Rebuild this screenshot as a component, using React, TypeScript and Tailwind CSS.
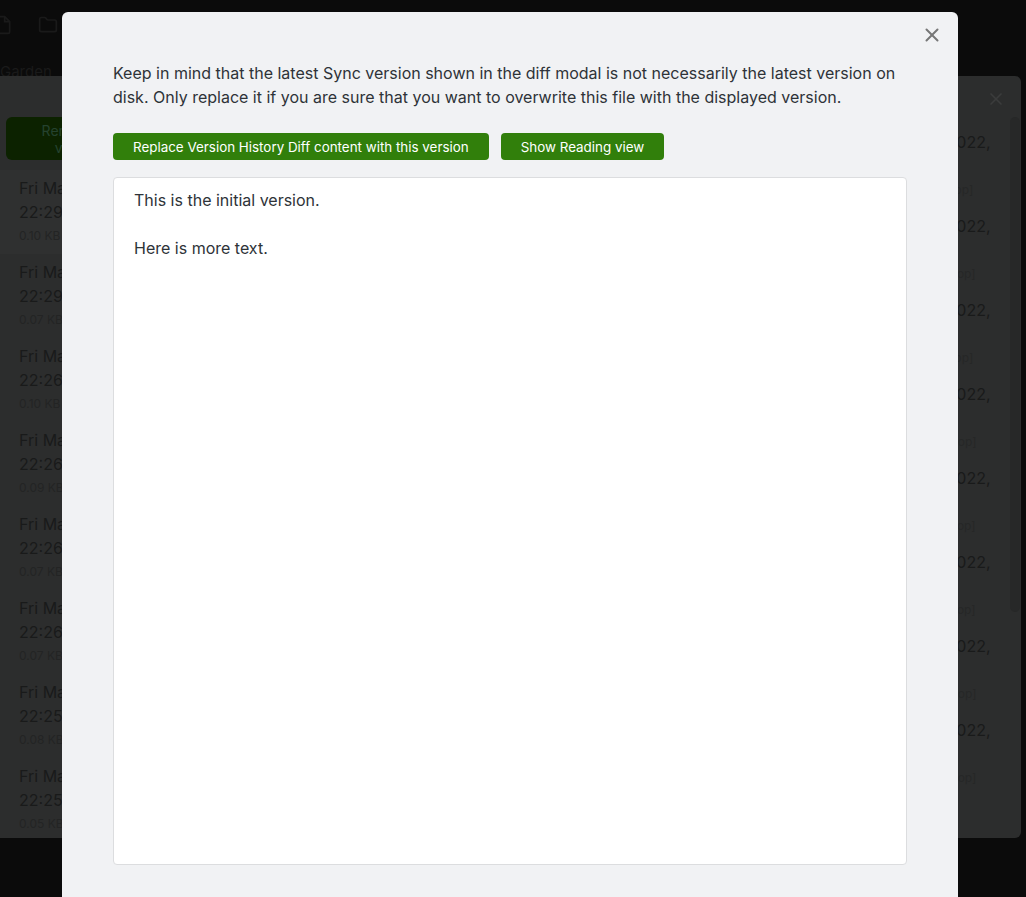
import { X } from 'lucide-react'

const rows = [
  { time: '22:29:41', size: '0.10 KB' },
  { time: '22:29:12', size: '0.07 KB' },
  { time: '22:26:50', size: '0.10 KB' },
  { time: '22:26:31', size: '0.09 KB' },
  { time: '22:26:12', size: '0.07 KB' },
  { time: '22:26:02', size: '0.07 KB' },
  { time: '22:25:44', size: '0.08 KB' },
  { time: '22:25:20', size: '0.05 KB' },
]

function TopBar() {
  return (
    <div className="h-[76px] overflow-hidden pt-[15px] text-[#1a1a1a]">
      <div className="-ml-[7px] flex items-center gap-[24px]">
        <svg width="20" height="20" viewBox="0 0 24 24" fill="none" stroke="currentColor" strokeWidth="2">
          <path d="M14 2H6a2 2 0 0 0-2 2v16a2 2 0 0 0 2 2h12a2 2 0 0 0 2-2V8z" />
          <path d="M14 2v6h6" />
        </svg>
        <svg width="22" height="20" viewBox="0 0 24 24" fill="none" stroke="currentColor" strokeWidth="2">
          <path d="M4 20h16a2 2 0 0 0 2-2V8a2 2 0 0 0-2-2h-7.9a2 2 0 0 1-1.69-.9L9.6 3.9A2 2 0 0 0 7.93 3H4a2 2 0 0 0-2 2v13a2 2 0 0 0 2 2Z" />
        </svg>
      </div>
      <div className="mt-[27px] text-[15px] leading-[20px] font-['Inter',sans-serif]">Garden</div>
    </div>
  )
}

function HistoryModal() {
  return (
    <div className="absolute left-0 top-[76px] flex h-[762px] w-[1021px] overflow-hidden rounded-r-md bg-[#2c2d2d] font-['Inter',sans-serif] text-[#191a1a]">
      <div className="w-[200px] overflow-hidden pt-[41px]">
        <div className="ml-[6px] flex h-[43px] w-[146px] items-center justify-center rounded-md bg-[#0c2200] px-4 text-center text-[14px] leading-[17px] text-[#25422f]">
          Render this version
        </div>
        <div className="mt-[10px]">
          {rows.map((r, i) => (
            <div
              key={r.time}
              className={`whitespace-nowrap px-[19px] py-[6px] ${i === 0 ? 'bg-[#2f3030]' : ''}`}
            >
              <div className="text-[16px] leading-[24px]">Fri Mar 25 2022,</div>
              <div className="text-[16px] leading-[24px]">{r.time}</div>
              <div className="text-[12px] leading-[24px] text-[#232424]">{r.size}</div>
            </div>
          ))}
        </div>
      </div>
      <div className="flex-1" />
      <div className="relative w-[168px] overflow-hidden pt-[54px]">
        <div className="absolute right-[15px] top-[13px] text-[#3b3c3c]">
          <X size={20} strokeWidth={2} />
        </div>
        <div className="absolute right-[1px] top-[41px] h-[495px] w-[10px] rounded-md bg-[#272828]" />
        {rows.map((r) => (
          <div key={r.time} className="h-[84px] whitespace-nowrap pl-[12px]">
            <div className="text-[16px] leading-[24px]">Fri Mar 25 2022,</div>
            <div className="text-[16px] leading-[24px]">{r.time}</div>
            <div className="text-[12px] leading-[24px] text-[#262727]">
              {r.size} – [desktop]
            </div>
          </div>
        ))}
      </div>
    </div>
  )
}

function DiffModal() {
  return (
    <div className="absolute left-[62px] top-[12px] h-[900px] w-[896px] rounded-t-md bg-[#f1f2f4] px-[51px] pt-[49px] font-['Inter',sans-serif] text-[#2e3338]">
      <button className="absolute right-[15px] top-[12px] text-[#777]">
        <X size={22} strokeWidth={2.2} />
      </button>
      <p className="text-[16px] leading-[24px]">
        Keep in mind that the latest Sync version shown in the diff modal is not necessarily the latest version on
        disk. Only replace it if you are sure that you want to overwrite this file with the displayed version.
      </p>
      <div className="mt-[24px] flex gap-[12px]">
        <button className="h-[27px] rounded-[4px] bg-[#317f0b] px-5 pt-[1px] text-[13.4px] text-white">
          Replace Version History Diff content with this version
        </button>
        <button className="h-[27px] rounded-[4px] bg-[#317f0b] px-5 pt-[1px] text-[13.4px] text-white">
          Show Reading view
        </button>
      </div>
      <div className="mt-[17px] h-[688px] rounded-[4px] border border-[#dcdddf] bg-white px-[20px] pt-[10px] text-[16px] leading-[24px]">
        <p>This is the initial version.</p>
        <p className="mt-[24px]">Here is more text.</p>
      </div>
    </div>
  )
}

export default function App() {
  return (
    <div className="relative h-[897px] w-[1026px] overflow-hidden bg-[#0b0b0b]">
      <TopBar />
      <HistoryModal />
      <DiffModal />
    </div>
  )
}
